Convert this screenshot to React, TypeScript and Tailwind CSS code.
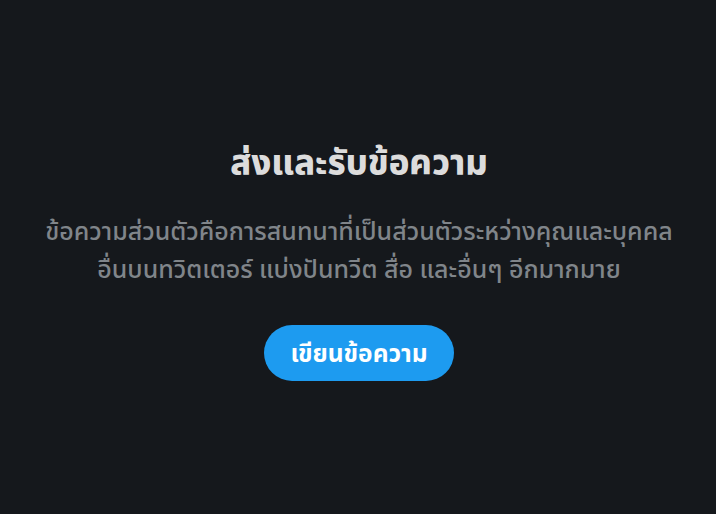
export default function App() {
  return (
    <div
      className="flex h-[514px] w-[716px] flex-col items-center bg-[#15181c] pt-[142px] pl-[2px] text-center"
      style={{ fontFamily: '"Noto Sans", "Noto Sans Thai", Tahoma, sans-serif' }}
    >
      <h1 className="whitespace-nowrap text-[34.5px] font-extrabold leading-[40px] text-[#dcdcdc]">ส่งและรับข้อความ</h1>
      <p className="mt-[29px] whitespace-nowrap text-[25px] font-medium leading-[38px] text-[#80858a]">
        ข้อความส่วนตัวคือการสนทนาที่เป็นส่วนตัวระหว่างคุณและบุคคล
        <br />
        อื่นบนทวิตเตอร์ แบ่งปันทวีต สื่อ และอื่นๆ อีกมากมาย
      </p>
      <button className="mt-[38px] h-[56px] w-[190px] rounded-full bg-[#1d9bf0] text-[24.5px] font-bold text-white">
        เขียนข้อความ
      </button>
    </div>
  );
}
